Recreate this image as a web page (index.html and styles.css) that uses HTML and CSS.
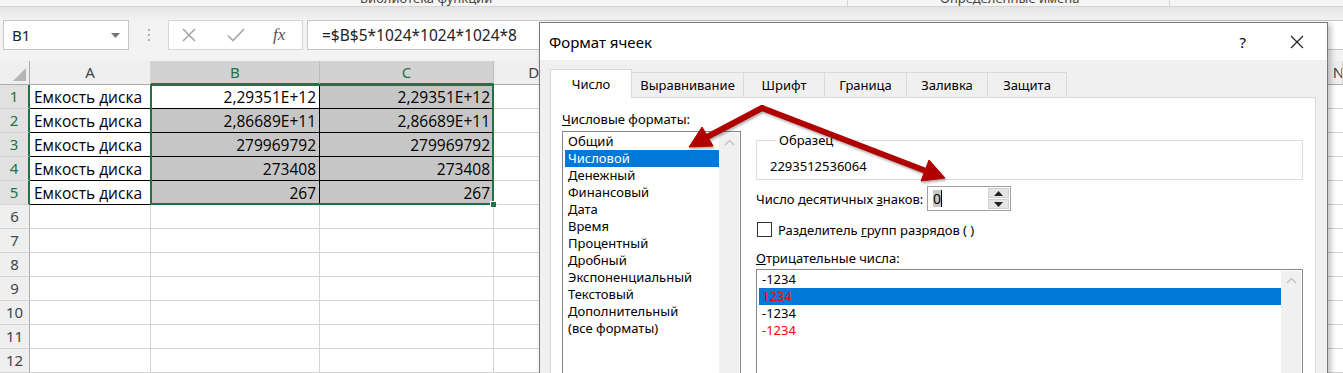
FILE: index.html
```html
<!DOCTYPE html>
<html lang="ru">
<head>
    <meta charset="UTF-8">
    <title>Формат ячеек</title>
    <link rel="stylesheet" href="styles.css">
</head>
<body>
    <div class="app">
        <div class="ribbon-edge">
            <span class="group-label lib">Библиотека функций</span>
            <span class="group-sep"></span>
            <span class="group-label names">Определенные имена</span>
            <span class="group-sep"></span>
        </div>
        <div class="ribbon-shade"></div>

        <div class="formula-row">
            <div class="namebox">
                <span>B1</span>
                <svg class="dd" width="9" height="5" viewBox="0 0 9 5"><path d="M0 0h9L4.5 5z" fill="#777"/></svg>
            </div>
            <div class="grip"><i></i><i></i><i></i></div>
            <div class="fx-box">
                <svg width="16" height="16" viewBox="0 0 16 16"><path d="M2 2l12 12M14 2L2 14" stroke="#a6a6a6" stroke-width="1.6" fill="none"/></svg>
                <svg width="18" height="16" viewBox="0 0 18 16"><path d="M1 8.5l5 5L17 2" stroke="#a6a6a6" stroke-width="1.6" fill="none"/></svg>
                <span class="fx">fx</span>
            </div>
            <div class="formula">=$B$5*1024*1024*1024*8</div>
        </div>

        <div class="grid">
            <div class="corner"><svg width="13" height="13" viewBox="0 0 13 13"><path d="M13 0v13H0z" fill="#b5b5b5"/></svg></div>
            <div class="ch">A</div>
            <div class="ch sel">B</div>
            <div class="ch sel">C</div>
            <div class="ch">D</div>
            <div class="ch rest"><span>N</span></div>

            <div class="rh sel">1</div>
            <div class="c t">Емкость диска</div>
            <div class="c t num">2,29351E+12</div>
            <div class="c t num hl">2,29351E+12</div>
            <div class="c"></div>
            <div class="c rest"></div>

            <div class="rh sel">2</div>
            <div class="c t">Емкость диска</div>
            <div class="c t num hl">2,86689E+11</div>
            <div class="c t num hl">2,86689E+11</div>
            <div class="c"></div>
            <div class="c rest"></div>

            <div class="rh sel">3</div>
            <div class="c t">Емкость диска</div>
            <div class="c t num hl">279969792</div>
            <div class="c t num hl">279969792</div>
            <div class="c"></div>
            <div class="c rest"></div>

            <div class="rh sel">4</div>
            <div class="c t">Емкость диска</div>
            <div class="c t num hl">273408</div>
            <div class="c t num hl">273408</div>
            <div class="c"></div>
            <div class="c rest"></div>

            <div class="rh sel">5</div>
            <div class="c t">Емкость диска</div>
            <div class="c t num hl">267</div>
            <div class="c t num hl">267</div>
            <div class="c"></div>
            <div class="c rest"></div>

            <div class="rh">6</div><div class="c"></div><div class="c"></div><div class="c"></div><div class="c"></div><div class="c rest"></div>
            <div class="rh">7</div><div class="c"></div><div class="c"></div><div class="c"></div><div class="c"></div><div class="c rest"></div>
            <div class="rh">8</div><div class="c"></div><div class="c"></div><div class="c"></div><div class="c"></div><div class="c rest"></div>
            <div class="rh">9</div><div class="c"></div><div class="c"></div><div class="c"></div><div class="c"></div><div class="c rest"></div>
            <div class="rh">10</div><div class="c"></div><div class="c"></div><div class="c"></div><div class="c"></div><div class="c rest"></div>
            <div class="rh">11</div><div class="c"></div><div class="c"></div><div class="c"></div><div class="c"></div><div class="c rest"></div>
            <div class="rh">12</div><div class="c"></div><div class="c"></div><div class="c"></div><div class="c"></div><div class="c rest"></div>

            <div class="selection"><span class="handle"></span></div>
        </div>

        <div class="dialog">
            <div class="dlg-title">
                <span class="dlg-name">Формат ячеек</span>
                <span class="help">?</span>
                <svg class="close" width="14" height="14" viewBox="0 0 14 14"><path d="M1 1l12 12M13 1L1 13" stroke="#222" stroke-width="1.2" fill="none"/></svg>
            </div>
            <div class="dlg-body">
                <div class="tabs">
                    <div class="tab active" style="width:82px">Число</div>
                    <div class="tab" style="width:113px">Выравнивание</div>
                    <div class="tab" style="width:82px">Шрифт</div>
                    <div class="tab" style="width:83px">Граница</div>
                    <div class="tab" style="width:82px">Заливка</div>
                    <div class="tab" style="width:80px">Защита</div>
                </div>
                <div class="panel">
                    <div class="col-left">
                        <div class="lbl"><u>Ч</u>исловые форматы:</div>
                        <div class="listbox formats">
                            <ul>
                                <li>Общий</li>
                                <li class="on">Числовой</li>
                                <li>Денежный</li>
                                <li>Финансовый</li>
                                <li>Дата</li>
                                <li>Время</li>
                                <li>Процентный</li>
                                <li>Дробный</li>
                                <li>Экспоненциальный</li>
                                <li>Текстовый</li>
                                <li>Дополнительный</li>
                                <li>(все форматы)</li>
                            </ul>
                            <div class="scroll">
                                <svg width="11" height="7" viewBox="0 0 11 7"><path d="M1 6l4.5-4.5L10 6" stroke="#c4c4c4" stroke-width="1.5" fill="none"/></svg>
                            </div>
                        </div>
                    </div>
                    <div class="col-right">
                        <fieldset class="sample">
                            <legend>Образец</legend>
                            <div class="sample-value">2293512536064</div>
                        </fieldset>
                        <div class="decimals">
                            <span class="dec-label">Число десятичных <u>з</u>наков:</span>
                            <div class="spin">
                                <div class="spin-field"><span class="picked">0</span><span class="caret"></span></div>
                                <div class="spin-btns">
                                    <span><svg width="9" height="5" viewBox="0 0 9 5"><path d="M0 5h9L4.5 0z" fill="#222"/></svg></span>
                                    <span><svg width="9" height="5" viewBox="0 0 9 5"><path d="M0 0h9L4.5 5z" fill="#222"/></svg></span>
                                </div>
                            </div>
                        </div>
                        <div class="check"><span class="box"></span><span>Разделитель <u>г</u>рупп разрядов ( )</span></div>
                        <div class="lbl neg-lbl"><u>О</u>трицательные числа:</div>
                        <div class="listbox neg">
                            <ul>
                                <li>-1234</li>
                                <li class="on red">1234</li>
                                <li>-1234</li>
                                <li class="red">-1234</li>
                            </ul>
                            <div class="scroll">
                                <svg width="11" height="7" viewBox="0 0 11 7"><path d="M1 6l4.5-4.5L10 6" stroke="#c4c4c4" stroke-width="1.5" fill="none"/></svg>
                            </div>
                        </div>
                    </div>
                </div>
            </div>
        </div>

        <svg class="arrows" width="1343" height="373" viewBox="0 0 1343 373">
            <g fill="#b00000" stroke="#b00000">
                <line x1="762" y1="108" x2="707" y2="137" stroke-width="6" stroke-linecap="round"/>
                <polygon points="689,147 702,127 713,146" stroke-width="1" stroke-linejoin="round"/>
                <line x1="762" y1="108" x2="926" y2="171" stroke-width="6" stroke-linecap="round"/>
                <polygon points="945,178 929,160 921,181" stroke-width="1" stroke-linejoin="round"/>
            </g>
        </svg>
    </div>
</body>
</html>
```

FILE: styles.css
```css
* {
    box-sizing: border-box;
}

body {
    margin: 0;
    width: 1343px;
    height: 373px;
    overflow: hidden;
    background: #f3f3f3;
    font-family: "Open Sans", sans-serif;
}

.app {
    position: relative;
    height: 373px;
    overflow: hidden;
}

/* ribbon bottom edge */
.ribbon-edge {
    height: 7px;
    display: flex;
    overflow: hidden;
    background: #f5f5f5;
    border-bottom: 1px solid #d5d5d5;
    font: 13px "Noto Sans", sans-serif;
    color: #444;
}

.group-label {
    line-height: 13px;
    margin-top: -8px;
    white-space: nowrap;
}

.group-label.lib {
    margin-left: 360px;
    width: 487px;
}

.group-label.names {
    margin-left: 92px;
    width: 229px;
}

.group-sep {
    width: 1px;
    background: #d5d5d5;
}

.ribbon-shade {
    height: 13px;
    background: linear-gradient(#e4e4e4, #ececec 60%, #f3f3f3);
}

/* formula bar */
.formula-row {
    display: flex;
    height: 30px;
}

.namebox {
    margin-left: 3px;
    width: 126px;
    background: #fff;
    border: 1px solid #c6c6c6;
    display: flex;
    align-items: center;
    justify-content: space-between;
    padding: 0 8px 0 8px;
    font: 15px "Noto Sans", sans-serif;
    color: #222;
}

.grip {
    width: 39px;
    display: flex;
    flex-direction: column;
    align-items: center;
    justify-content: center;
    gap: 3px;
}

.grip i {
    width: 2px;
    height: 2px;
    background: #b0b0b0;
}

.fx-box {
    width: 135px;
    background: #fff;
    border: 1px solid #d6d6d6;
    display: flex;
    align-items: center;
    padding-left: 12px;
    gap: 30px;
}

.fx {
    font: italic 17px "Liberation Serif", serif;
    color: #555;
    margin-left: -2px;
}

.formula {
    flex: 1;
    margin-left: 4px;
    background: #fff;
    border: 1px solid #c6c6c6;
    border-right: none;
    padding-left: 14px;
    font: 15.5px "Noto Sans", sans-serif;
    line-height: 28px;
    color: #222;
}

/* worksheet grid */
.grid {
    position: relative;
    margin-top: 11px;
    display: grid;
    grid-template-columns: 30px 121px 169px 174px 80.5px 1fr;
    grid-auto-rows: 24px;
    background: #fff;
}

.corner,
.ch,
.rh {
    background: #efefef;
    color: #444;
    font: 15px "Noto Sans", sans-serif;
}

.corner {
    border-right: 1px solid #ababab;
    border-bottom: 1px solid #ababab;
    display: flex;
    align-items: flex-end;
    justify-content: flex-end;
    padding: 0 3px 3px 0;
}

.ch {
    border-right: 1px solid #d4d4d4;
    border-bottom: 1px solid #ababab;
    text-align: center;
    line-height: 23px;
}

.ch.sel {
    background: #d2d2d2;
    color: #217346;
    border-right-color: #bcbcbc;
    border-bottom: 2px solid #217346;
}

.ch.rest {
    text-align: left;
    padding-left: 724px;
    overflow: hidden;
    white-space: nowrap;
}

.ch.rest span {
    display: inline-block;
    width: 80px;
    text-align: center;
}

.rh {
    border-right: 1px solid #ababab;
    border-bottom: 1px solid #d4d4d4;
    text-align: center;
    line-height: 23px;
}

.rh.sel {
    background: #e1e1e1;
    color: #217346;
    border-right: 2px solid #217346;
}

.c {
    border-right: 1px solid #d4d4d4;
    border-bottom: 1px solid #d4d4d4;
    font: 15.5px "Open Sans", sans-serif;
    line-height: 24px;
    padding: 0 4px;
    color: #000;
    white-space: nowrap;
    overflow: hidden;
}

.c.rest {
    border-right: none;
}

.c.t {
    border-right-color: #000;
    border-bottom-color: #000;
}

.c.num {
    text-align: right;
    padding-right: 3px;
}

.c.hl {
    background: #c6c6c6;
}

/* selection frame sits over cells B1:C5 */
.selection {
    position: absolute;
    grid-column: 3 / 5;
    grid-row: 2 / 7;
    top: -1px;
    left: -1px;
    right: 0;
    bottom: 0;
    border: 2px solid #217346;
    pointer-events: none;
}

.handle {
    position: absolute;
    right: -5px;
    bottom: -5px;
    width: 7px;
    height: 7px;
    background: #217346;
    border: 1px solid #fff;
}

/* dialog window */
.dialog {
    position: absolute;
    left: 539px;
    top: 22px;
    width: 789px;
    height: 380px;
    background: #f0f0f0;
    border: 1px solid #7a7a7a;
    box-shadow: 3px 2px 6px rgba(0, 0, 0, 0.25);
    font: 13px "Noto Sans", sans-serif;
    color: #000;
}

.dlg-title {
    height: 37px;
    background: #fff;
    display: flex;
    align-items: center;
    padding-left: 9px;
}

.dlg-name {
    font-size: 15px;
    flex: 1;
}

.help {
    font-size: 15px;
    margin-right: 44px;
}

.close {
    margin-right: 23px;
}

.dlg-body {
    padding: 9px 11px 0 10px;
}

.tabs {
    display: flex;
    align-items: flex-end;
    height: 28px;
}

.tab {
    height: 25px;
    border: 1px solid #d9d9d9;
    border-bottom: none;
    margin-right: -1px;
    text-align: center;
    line-height: 24px;
    background: #f0f0f0;
}

.tab.active {
    height: 29px;
    margin-bottom: -1px;
    background: #fff;
    line-height: 28px;
    position: relative;
}

.panel {
    height: 290px;
    background: #fff;
    border: 1px solid #d9d9d9;
    display: flex;
    padding: 0 12px 0 11px;
    gap: 15px;
}

.lbl {
    line-height: 17px;
    margin-top: 13px;
}

.listbox {
    display: flex;
    border: 1px solid #828790;
    background: #fff;
    padding: 1px 1px 0 2px;
}

.listbox ul {
    list-style: none;
    margin: 0;
    padding: 0;
    flex: 1;
}

.listbox li {
    height: 17px;
    line-height: 17px;
    padding-left: 3px;
}

.listbox li.on {
    background: #0078d7;
    color: #fff;
}

.listbox li.red {
    color: #ff0000;
}

.scroll {
    width: 20px;
    background: #f0f0f0;
    display: flex;
    justify-content: center;
    padding-top: 6px;
}

.formats {
    margin-top: 3px;
    width: 179px;
    height: 260px;
}

.col-right {
    flex: 1;
}

.sample {
    margin: 34px 0 0;
    padding: 0 0 0 13px;
    height: 48px;
    border: 1px solid #dcdcdc;
}

.sample legend {
    padding: 0 3px;
    margin-left: 6px;
    line-height: 17px;
}

.sample-value {
    line-height: 17px;
    margin-top: 9px;
}

.decimals {
    display: flex;
    align-items: center;
    margin-top: 6px;
}

.dec-label {
    width: 171px;
}

.spin {
    display: flex;
    width: 84px;
    height: 25px;
    border: 1px solid #a0a0a0;
    padding: 1px;
}

.spin-field {
    flex: 1;
    display: flex;
    align-items: center;
    padding-left: 4px;
    font-size: 14px;
}

.picked {
    background: #c8c8c8;
    line-height: 17px;
}

.caret {
    width: 1px;
    height: 17px;
    background: #000;
}

.spin-btns {
    width: 21px;
    display: flex;
    flex-direction: column;
    gap: 1px;
}

.spin-btns span {
    flex: 1;
    background: #e5e5e5;
    border: 1px solid #cfcfcf;
    display: flex;
    align-items: center;
    justify-content: center;
}

.check {
    display: flex;
    align-items: center;
    margin-top: 11px;
    height: 15px;
}

.check .box {
    width: 15px;
    height: 15px;
    border: 1px solid #333;
    margin: 0 6px 0 1px;
}

.neg-lbl {
    margin-top: 13px;
}

.neg {
    margin-top: 2px;
    height: 120px;
}

.arrows {
    position: absolute;
    left: 0;
    top: 0;
    pointer-events: none;
    filter: drop-shadow(1px 2px 1px rgba(0, 0, 0, 0.3));
}
```
